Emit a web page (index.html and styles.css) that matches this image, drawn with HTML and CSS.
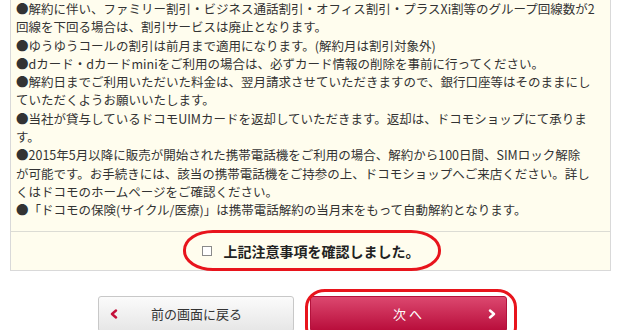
FILE: index.html
```html
<!DOCTYPE html>
<html lang="ja">
<head>
<meta charset="utf-8">
<title>注意事項</title>
<link rel="stylesheet" href="styles.css">
</head>
<body>
<div class="page">
  <div class="box">
    <div class="notes">
      <p>●解約に伴い、ファミリー割引・ビジネス通話割引・オフィス割引・プラスXi割等のグループ回線数が2<br>回線を下回る場合は、割引サービスは廃止となります。</p>
      <p>●ゆうゆうコールの割引は前月まで適用になります。(解約月は割引対象外)</p>
      <p>●dカード・dカードminiをご利用の場合は、必ずカード情報の削除を事前に行ってください。</p>
      <p>●解約日までご利用いただいた料金は、翌月請求させていただきますので、銀行口座等はそのままにし<br>ていただくようお願いいたします。</p>
      <p>●当社が貸与しているドコモUIMカードを返却していただきます。返却は、ドコモショップにて承りま<br>す。</p>
      <p>●2015年5月以降に販売が開始された携帯電話機をご利用の場合、解約から100日間、SIMロック解除<br>が可能です。お手続きには、該当の携帯電話機をご持参の上、ドコモショップへご来店ください。詳し<br>くはドコモのホームページをご確認ください。</p>
      <p>●「ドコモの保険(サイクル/医療)」は携帯電話解約の当月末をもって自動解約となります。</p>
    </div>
    <div class="confirm">
      <label class="confirm-label">
        <input type="checkbox" class="check">
        <span>上記注意事項を確認しました。</span>
      </label>
      <span class="mark mark-confirm"></span>
    </div>
  </div>
  <div class="actions">
    <button class="btn btn-back" type="button">
      <svg class="chev" width="8" height="10" viewBox="0 0 8 10"><polyline points="6,1.5 2,5 6,8.5" fill="none" stroke="#c4103a" stroke-width="2.4" stroke-linecap="round" stroke-linejoin="round"/></svg>
      <span class="btn-text">前の画面に戻る</span>
    </button>
    <button class="btn btn-next" type="button">
      <span class="btn-text next-text">次へ</span>
      <svg class="chev" width="8" height="10" viewBox="0 0 8 10"><polyline points="2,1.5 6,5 2,8.5" fill="none" stroke="#ffffff" stroke-width="2.4" stroke-linecap="round" stroke-linejoin="round"/></svg>
      <span class="mark mark-next"></span>
    </button>
  </div>
</div>
</body>
</html>
```
FILE: styles.css
```css
html, body {
  margin: 0;
  padding: 0;
  background: #ffffff;
}
body {
  font-family: "Noto Sans CJK JP", "Noto Sans", sans-serif;
  color: #333333;
}
.page {
  width: 621px;
  overflow: hidden;
  height: 330px;
}
.box {
  margin: 0 0 0 10px;
  width: 601px;
  box-sizing: border-box;
  background: #fffdee;
  border: 1px solid #d9d9d9;
  border-top: none;
}
.notes {
  padding: 0 4px 11px 5px;
  border-bottom: 1px solid #dcdcd4;
  font-size: 12.5px;
  line-height: 18.3px;
  white-space: nowrap;
}
.notes p {
  margin: 0;
}
.confirm {
  position: relative;
  height: 38px;
  display: flex;
  align-items: center;
  justify-content: center;
}
.confirm-label {
  display: flex;
  align-items: center;
  gap: 12px;
  font-size: 14px;
  font-weight: bold;
  color: #222222;
}
.check {
  appearance: none;
  -webkit-appearance: none;
  margin: 0;
  width: 10px;
  height: 10px;
  border: 1px solid #8a8a8a;
  background: #ffffff;
  box-sizing: border-box;
}
.mark {
  position: absolute;
  border: 3px solid #e8141c;
  box-sizing: border-box;
  pointer-events: none;
}
.mark-confirm {
  left: 172px;
  top: -2px;
  width: 258px;
  height: 41px;
  border-radius: 30px / 20px;
}
.actions {
  display: flex;
  gap: 16px;
  padding-left: 98px;
  margin-top: 25px;
}
.btn {
  position: relative;
  display: flex;
  align-items: center;
  height: 36px;
  width: 196px;
  box-sizing: border-box;
  border-radius: 3px;
  padding: 0 10px 0 11px;
  font-family: "Noto Sans CJK JP", "Noto Sans", sans-serif;
  font-size: 13px;
  cursor: pointer;
}
.btn-back {
  background: linear-gradient(#fbfbfb, #e6e6e6);
  border: 1px solid #c8c8c8;
  color: #333333;
}
.btn-next {
  width: 197px;
  background: linear-gradient(#dc486f, #b80c3a);
  border: 1px solid #b3123c;
  color: #ffffff;
}
.btn-text {
  flex: 1;
  text-align: center;
}
.btn-back .btn-text {
  padding-right: 8px;
}
.next-text {
  padding-left: 8px;
  letter-spacing: 3px;
}
.chev {
  display: block;
  flex: none;
}
.mark-next {
  left: -6px;
  top: -8px;
  width: 212px;
  height: 56px;
  border-radius: 20px / 18px;
}
```
